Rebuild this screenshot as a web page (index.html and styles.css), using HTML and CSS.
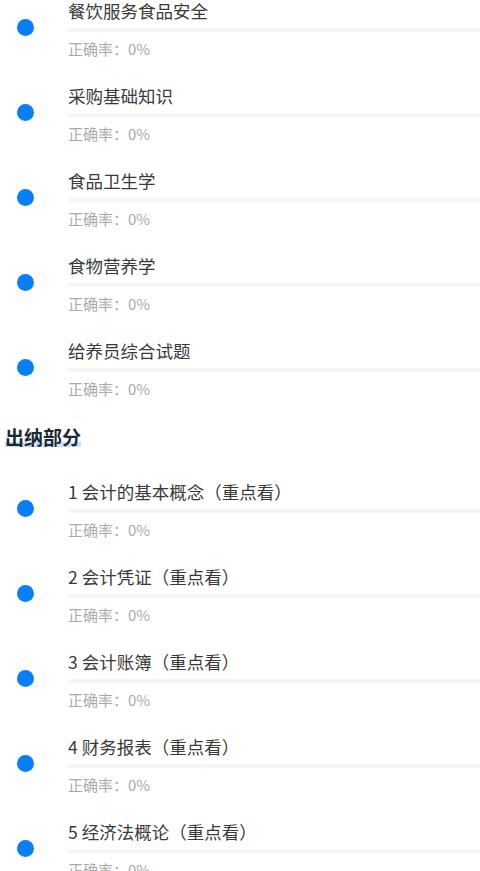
FILE: index.html
```html
<!DOCTYPE HTML>
<html lang="zh-CN">
<head>
    <title>练习列表</title>
    <meta charset="UTF-8">
    <meta name="viewport" content="width=device-width, initial-scale=1"/>
    <link rel="stylesheet" href="styles.css">
</head>
<body>
<div class="list">
    <div class="item">
        <span class="dot"></span>
        <div class="info">
            <p class="name">餐饮服务食品安全</p>
            <div class="bar"></div>
            <p class="rate">正确率：0%</p>
        </div>
    </div>
    <div class="item">
        <span class="dot"></span>
        <div class="info">
            <p class="name">采购基础知识</p>
            <div class="bar"></div>
            <p class="rate">正确率：0%</p>
        </div>
    </div>
    <div class="item">
        <span class="dot"></span>
        <div class="info">
            <p class="name">食品卫生学</p>
            <div class="bar"></div>
            <p class="rate">正确率：0%</p>
        </div>
    </div>
    <div class="item">
        <span class="dot"></span>
        <div class="info">
            <p class="name">食物营养学</p>
            <div class="bar"></div>
            <p class="rate">正确率：0%</p>
        </div>
    </div>
    <div class="item">
        <span class="dot"></span>
        <div class="info">
            <p class="name">给养员综合试题</p>
            <div class="bar"></div>
            <p class="rate">正确率：0%</p>
        </div>
    </div>
</div>

<h2 class="section-title"><span>出纳部分</span></h2>

<div class="list">
    <div class="item">
        <span class="dot"></span>
        <div class="info">
            <p class="name">1 会计的基本概念（重点看）</p>
            <div class="bar"></div>
            <p class="rate">正确率：0%</p>
        </div>
    </div>
    <div class="item">
        <span class="dot"></span>
        <div class="info">
            <p class="name">2 会计凭证（重点看）</p>
            <div class="bar"></div>
            <p class="rate">正确率：0%</p>
        </div>
    </div>
    <div class="item">
        <span class="dot"></span>
        <div class="info">
            <p class="name">3 会计账簿（重点看）</p>
            <div class="bar"></div>
            <p class="rate">正确率：0%</p>
        </div>
    </div>
    <div class="item">
        <span class="dot"></span>
        <div class="info">
            <p class="name">4 财务报表（重点看）</p>
            <div class="bar"></div>
            <p class="rate">正确率：0%</p>
        </div>
    </div>
    <div class="item">
        <span class="dot"></span>
        <div class="info">
            <p class="name">5 经济法概论（重点看）</p>
            <div class="bar"></div>
            <p class="rate">正确率：0%</p>
        </div>
    </div>
</div>
</body>
</html>
```

FILE: styles.css
```css
* {
    box-sizing: border-box;
}

body {
    margin: 0;
    background: #fff;
    font-family: "Noto Sans CJK SC", "Noto Sans", sans-serif;
    overflow: hidden;
}

p {
    margin: 0;
}

.item {
    display: grid;
    grid-template-columns: 68px 1fr;
    padding-bottom: 26px;
}

.dot {
    width: 17px;
    height: 17px;
    margin: 19px 0 0 17px;
    border-radius: 50%;
    background-color: #0a7ff5;
}

.name {
    font-size: 17.5px;
    line-height: 22px;
    color: #3a3a3a;
    white-space: nowrap;
}

.bar {
    height: 4px;
    margin-top: 6px;
    background-color: #f5f5f5;
}

.rate {
    margin-top: 6px;
    font-size: 15px;
    line-height: 21px;
    color: #aaa;
}

.section-title {
    margin: 0 0 32px;
    padding-left: 5px;
    font-size: 19px;
    line-height: 24px;
    font-weight: 700;
    color: #1c2833;
}

.section-title span {
    display: inline-block;
    background: linear-gradient(transparent 70%, #cbe0f5 70%, #cbe0f5 90%, transparent 90%);
}
```
